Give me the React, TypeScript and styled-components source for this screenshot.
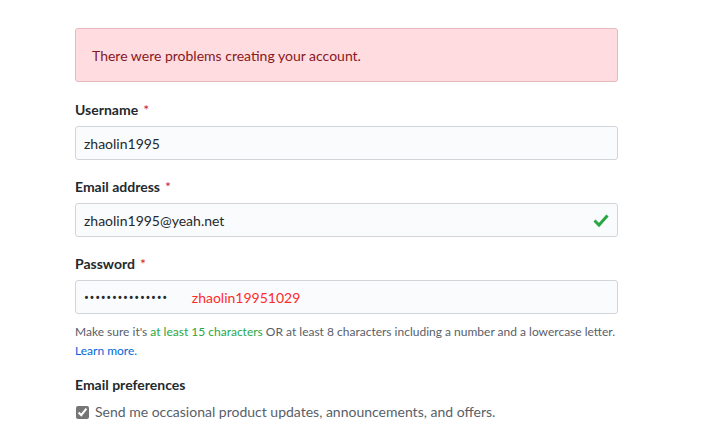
import React from "react";
import styled, { createGlobalStyle } from "styled-components";

const Global = createGlobalStyle`
  html, body { margin: 0; padding: 0; background: #fff; }
  body {
    font-family: Lato, "Noto Sans", sans-serif;
    color: #24292e;
    font-size: 14px;
  }
`;

const Page = styled.div`
  padding: 28px 0 0 75px;
  width: 543px;
`;

const Flash = styled.div`
  background: #ffdce0;
  border: 1px solid #e6b9bf;
  border-radius: 3px;
  color: #86181d;
  padding: 17px 16px 15px;
  line-height: 20px;
  font-size: 14px;
  margin-bottom: 18px;
`;

const Group = styled.div`
  margin-bottom: 17px;
`;

const Label = styled.div`
  font-weight: 700;
  font-size: 14px;
  line-height: 20px;
  margin-bottom: 6px;
  color: #24292e;
`;

const Req = styled.span`
  color: #cb2431;
  font-weight: 400;
  margin-left: 5px;
`;

const Field = styled.div`
  position: relative;
  box-sizing: border-box;
  height: 34px;
  background: #fafbfc;
  border: 1px solid #d1d5da;
  border-radius: 3px;
  padding: 0 8px;
  display: flex;
  align-items: center;
  font-size: 14px;
  color: #24292e;
`;

const Dots = styled.span`
  font-family: "Noto Sans", sans-serif;
  letter-spacing: 0.7px;
  font-size: 13px;
  color: #24292e;
`;

const Annotation = styled.span`
  color: #ff2b2b;
  margin-left: 24px;
  font-size: 14px;
`;

const Check = styled.svg`
  position: absolute;
  right: 8px;
  top: 9px;
`;

const Note = styled.p`
  margin: 8px 0 0;
  font-size: 12px;
  line-height: 19px;
  color: #586069;
`;

const Green = styled.span`
  color: #28a745;
`;

const Link = styled.a`
  color: #0366d6;
  text-decoration: none;
`;

const Section = styled.div`
  margin-top: 15px;
`;

const SectionTitle = styled.div`
  font-weight: 700;
  font-size: 14px;
  line-height: 20px;
  color: #24292e;
  margin-bottom: 7px;
`;

const CheckRow = styled.label`
  display: flex;
  align-items: center;
  gap: 6px;
  font-size: 14px;
  line-height: 20px;
  color: #586069;
  padding-left: 1px;
`;

const Box = styled.input`
  margin: 0;
  width: 13px;
  height: 13px;
  accent-color: #767676;
`;

const NextTitle = styled.div`
  margin-top: 19px;
  font-weight: 700;
  font-size: 14px;
  line-height: 20px;
  padding-left: 22px;
`;

export default function App() {
  return (
    <>
      <Global />
      <Page>
        <Flash>There were problems creating your account.</Flash>
        <Group>
          <Label>
            Username<Req>*</Req>
          </Label>
          <Field>zhaolin1995</Field>
        </Group>
        <Group>
          <Label>
            Email address<Req>*</Req>
          </Label>
          <Field>
            zhaolin1995@yeah.net
            <Check width="16" height="15" viewBox="0 0 16 15">
              <path d="M1.5 7.5 L6 12 L14.5 2.5" fill="none" stroke="#28a745" strokeWidth="3" />
            </Check>
          </Field>
        </Group>
        <div>
          <Label>
            Password<Req>*</Req>
          </Label>
          <Field>
            <Dots>•••••••••••••••</Dots>
            <Annotation>zhaolin19951029</Annotation>
          </Field>
          <Note>
            Make sure it's <Green>at least 15 characters</Green> OR at least 8 characters including a number and a lowercase letter.
            <br />
            <Link href="#">Learn more.</Link>
          </Note>
        </div>
        <Section>
          <SectionTitle>Email preferences</SectionTitle>
          <CheckRow>
            <Box type="checkbox" defaultChecked />
            Send me occasional product updates, announcements, and offers.
          </CheckRow>
        </Section>
        <NextTitle>Verify account</NextTitle>
      </Page>
    </>
  );
}
